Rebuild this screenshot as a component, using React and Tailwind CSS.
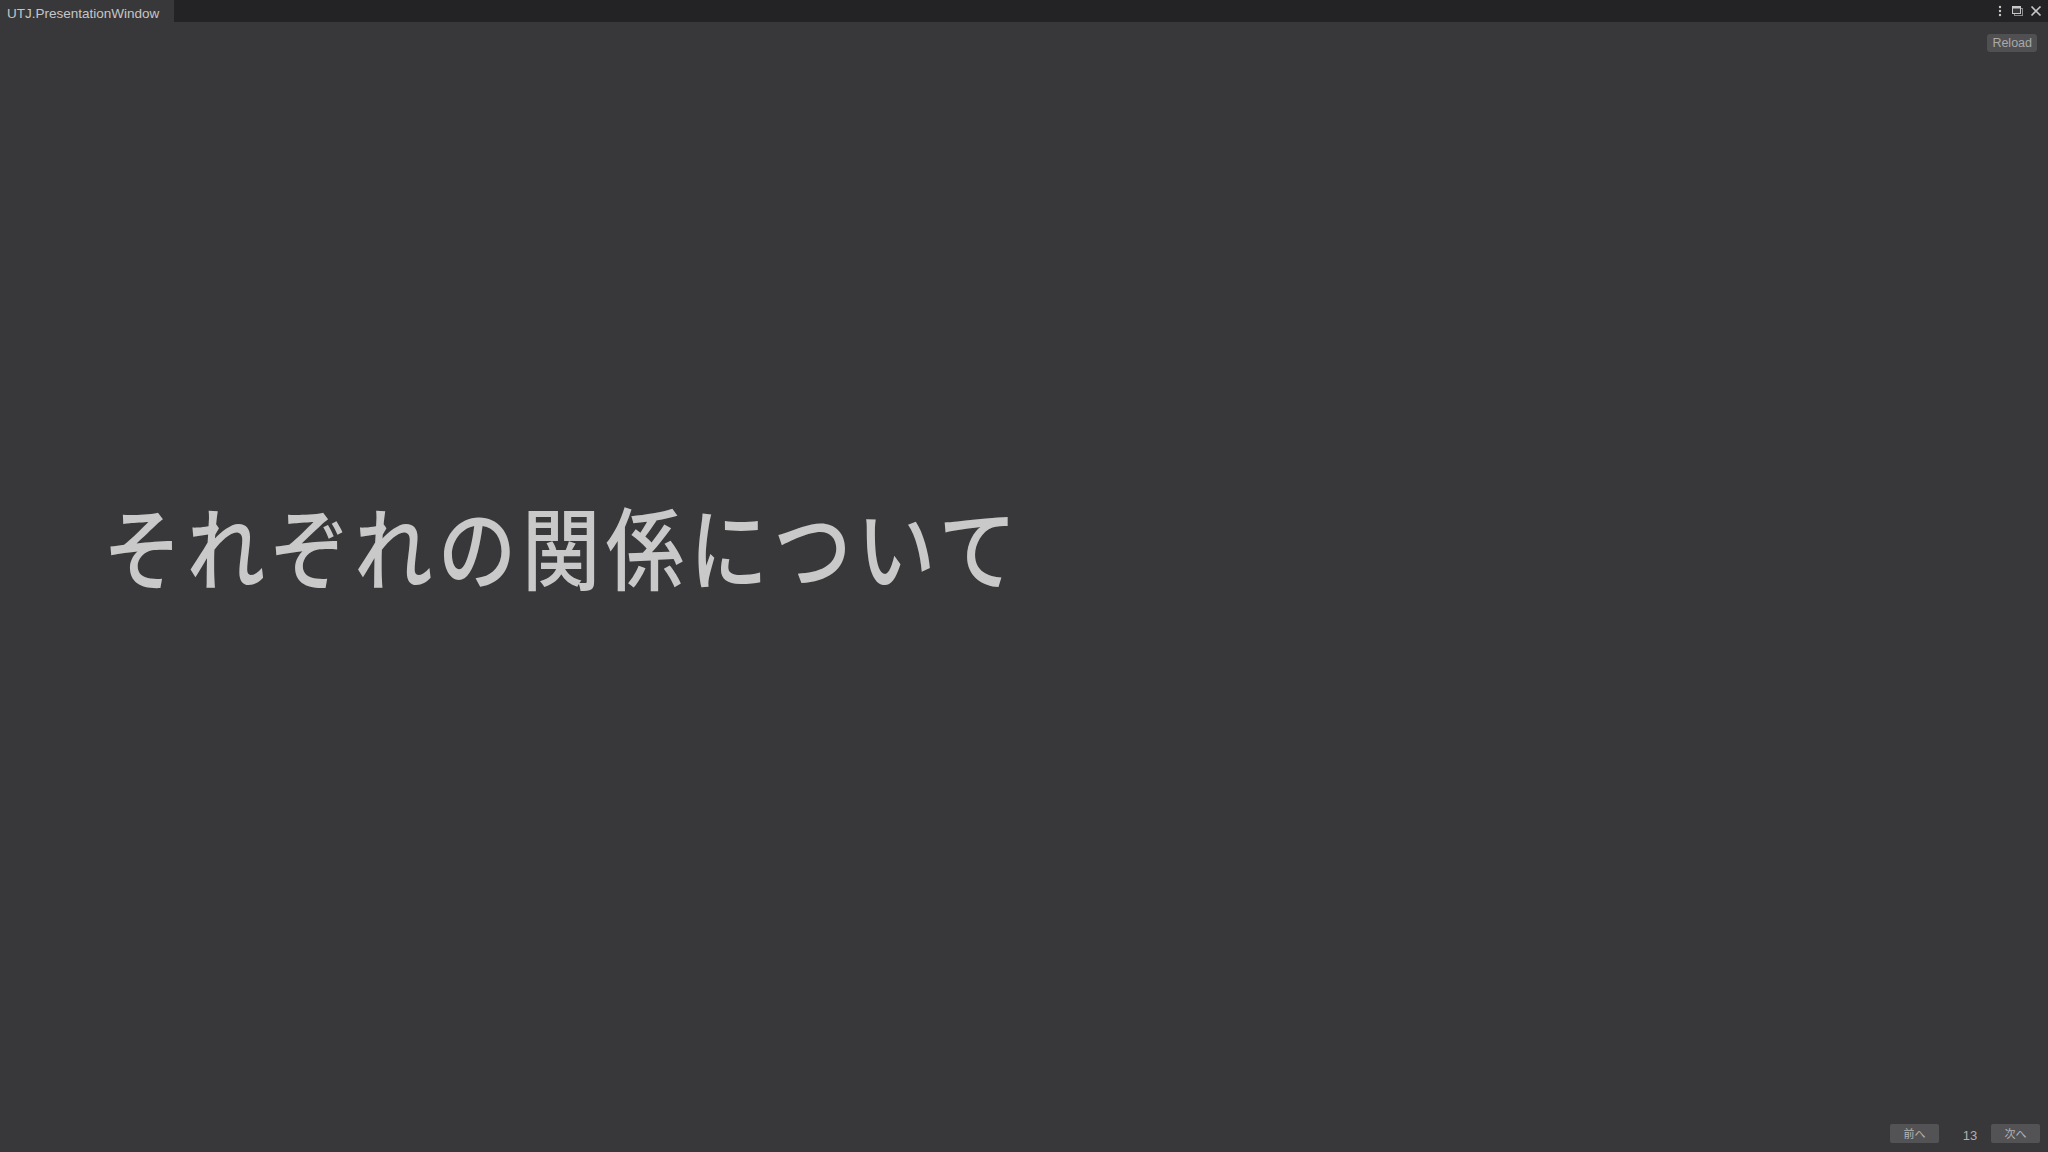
export default function App() {
  return (
    <div
      className="w-[2048px] h-[1152px] flex flex-col bg-[#38383a] overflow-hidden"
      style={{ fontFamily: '"Liberation Sans", "Noto Sans CJK JP", sans-serif' }}
    >
      {/* title bar */}
      <div className="h-[22px] flex items-stretch bg-[#232325] shrink-0">
        <div className="w-[174px] flex flex-col bg-[#38383a]">
          <div className="h-[2px] bg-[#3f7cc9]" />
          <div className="flex-1 flex items-center pl-[7px] pt-[4px] text-[13.5px] text-[#c6c6c6]">
            UTJ.PresentationWindow
          </div>
        </div>
        <div className="flex-1" />
        <div className="flex items-center gap-[6px] pr-[6px] text-[#c8c8c8]">
          <svg width="12" height="14" viewBox="0 0 12 14">
            <circle cx="6" cy="3" r="1.2" fill="currentColor" />
            <circle cx="6" cy="7" r="1.2" fill="currentColor" />
            <circle cx="6" cy="11" r="1.2" fill="currentColor" />
          </svg>
          <svg width="12" height="12" viewBox="0 0 12 12">
            <rect x="2.5" y="3.5" width="8" height="7" fill="none" stroke="#8a8a8a" />
            <rect x="0.5" y="1.5" width="8" height="7" fill="#38383a" stroke="currentColor" />
            <rect x="0.5" y="1.5" width="8" height="2" fill="currentColor" />
          </svg>
          <svg width="12" height="12" viewBox="0 0 12 12">
            <path d="M1.5 1.5 L10.5 10.5 M10.5 1.5 L1.5 10.5" stroke="currentColor" strokeWidth="1.6" />
          </svg>
        </div>
      </div>

      {/* content */}
      <div className="flex-1 flex flex-col">
        <div className="flex justify-end pt-[12px] pr-[11px]">
          <button className="h-[18px] px-[5px] rounded-[3px] bg-[#505052] text-[12.5px] leading-none text-[#a9a9a9]">
            Reload
          </button>
        </div>

        <div className="flex-1 pt-[447px] pl-[103px]">
          <div
            className="origin-left scale-x-[0.87] text-[90px] font-medium leading-none tracking-[6.3px] text-[#c9c9c9] whitespace-nowrap"
            style={{ fontFamily: '"Noto Sans CJK JP", sans-serif' }}
          >
            それぞれの関係について
          </div>
        </div>

        <div className="flex items-center justify-end pr-[8px] pb-[7px]">
          <button className="w-[49px] h-[19px] rounded-[2px] bg-[#535355] text-[11px] leading-none text-[#b4b4b4]" style={{ fontFamily: '"Noto Sans CJK JP", sans-serif' }}>
            前へ
          </button>
          <span className="w-[52px] pl-[10px] text-center text-[13px] text-[#b0b0b0] pt-[3px]">13</span>
          <button className="w-[49px] h-[19px] rounded-[2px] bg-[#535355] text-[11px] leading-none text-[#b4b4b4]" style={{ fontFamily: '"Noto Sans CJK JP", sans-serif' }}>
            次へ
          </button>
        </div>
      </div>
    </div>
  );
}
